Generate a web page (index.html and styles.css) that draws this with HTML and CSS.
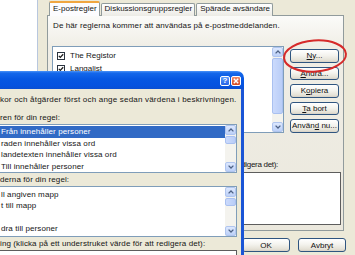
FILE: index.html
```html
<!DOCTYPE html>
<html lang="sv">
<head>
<meta charset="utf-8">
<title>Regler för meddelanden</title>
<link rel="stylesheet" href="styles.css">
</head>
<body>
<div class="desk">
  <div class="win-back">
    <div class="tabs">
      <div class="tab tab-active">E-postregler</div>
      <div class="tab">Diskussionsgruppsregler</div>
      <div class="tab">Spärade avsändare</div>
    </div>
    <div class="panel">
      <p class="intro">De här reglerna kommer att användas på e-postmeddelanden.</p>
      <div class="rules-row">
        <div class="listbox rules-list">
          <ul class="rules">
            <li><svg class="check" viewBox="0 0 8 8"><rect x="0.5" y="0.5" width="7" height="7" fill="#fff" stroke="#2b3440"/><path d="M1.8 3.9 L3.3 5.4 L6.2 2.2" fill="none" stroke="#1d1d1d" stroke-width="1.3"/></svg>The Registor</li>
            <li><svg class="check" viewBox="0 0 8 8"><rect x="0.5" y="0.5" width="7" height="7" fill="#fff" stroke="#2b3440"/><path d="M1.8 3.9 L3.3 5.4 L6.2 2.2" fill="none" stroke="#1d1d1d" stroke-width="1.3"/></svg>Langalist</li>
          </ul>
          <div class="scrollbar">
            <div class="sb-btn"><svg width="6" height="4" viewBox="0 0 6 4"><path d="M0.6 3.4 L3 1 L5.4 3.4" fill="none" stroke="#4d6185" stroke-width="1.3"/></svg></div>
            <div class="sb-track"><div class="sb-thumb sb-thumb-tall"></div></div>
            <div class="sb-btn"><svg width="6" height="4" viewBox="0 0 6 4"><path d="M0.6 0.6 L3 3 L5.4 0.6" fill="none" stroke="#4d6185" stroke-width="1.3"/></svg></div>
          </div>
        </div>
        <div class="btn-col">
          <button class="btn"><span><u>N</u>y...</span></button>
          <button class="btn"><span><u>Ä</u>ndra...</span></button>
          <button class="btn"><span>K<u>o</u>piera</span></button>
          <button class="btn"><span><u>T</u>a bort</span></button>
          <button class="btn"><span>Använ<u>d</u> nu...</span></button>
        </div>
      </div>
      <p class="desc-label">Regelbeskrivning (klicka på ett understruket värde för att redigera det):</p>
      <div class="desc-box"></div>
    </div>
    <div class="footer">
      <button class="btn btn-foot">OK</button>
      <button class="btn btn-foot">Avbryt</button>
    </div>
  </div>

  <svg class="ring" width="68" height="38" viewBox="0 0 68 38"><ellipse cx="33" cy="18" rx="31" ry="15.5" transform="rotate(-4 33 18)" fill="none" stroke="#d62a2a" stroke-width="2"/></svg>

  <div class="win-front">
    <div class="titlebar">
      <span class="tb-btn tb-help">?</span>
      <span class="tb-btn tb-close"><svg width="6" height="6" viewBox="0 0 6 6"><path d="M0.8 0.8 L5.2 5.2 M5.2 0.8 L0.8 5.2" stroke="#fff" stroke-width="1.4"/></svg></span>
    </div>
    <div class="fbody">
      <p class="line line-lead">kor och åtgärder först och ange sedan värdena i beskrivningen.</p>
      <p class="line lab1">ren för din regel:</p>
      <div class="listbox flist cond">
        <ul class="items">
          <li class="sel">Från innehåller personer</li>
          <li>raden innehåller vissa ord</li>
          <li>landetexten innehåller vissa ord</li>
          <li>Till innehåller personer</li>
        </ul>
        <div class="scrollbar">
          <div class="sb-btn"><svg width="6" height="4" viewBox="0 0 6 4"><path d="M0.6 3.4 L3 1 L5.4 3.4" fill="none" stroke="#4d6185" stroke-width="1.3"/></svg></div>
          <div class="sb-track"><div class="sb-thumb"></div></div>
          <div class="sb-btn"><svg width="6" height="4" viewBox="0 0 6 4"><path d="M0.6 0.6 L3 3 L5.4 0.6" fill="none" stroke="#4d6185" stroke-width="1.3"/></svg></div>
        </div>
      </div>
      <p class="line lab2">derna för din regel:</p>
      <div class="listbox flist acts">
        <ul class="items">
          <li>ll angiven mapp</li>
          <li>t till mapp</li>
          <li></li>
          <li>dra till personer</li>
        </ul>
        <div class="scrollbar">
          <div class="sb-btn"><svg width="6" height="4" viewBox="0 0 6 4"><path d="M0.6 3.4 L3 1 L5.4 3.4" fill="none" stroke="#4d6185" stroke-width="1.3"/></svg></div>
          <div class="sb-track"><div class="sb-thumb"></div></div>
          <div class="sb-btn"><svg width="6" height="4" viewBox="0 0 6 4"><path d="M0.6 0.6 L3 3 L5.4 0.6" fill="none" stroke="#4d6185" stroke-width="1.3"/></svg></div>
        </div>
      </div>
      <p class="line lab3">ing (klicka på ett understruket värde för att redigera det):</p>
      <div class="fdesc"></div>
    </div>
  </div>
</div>
</body>
</html>
```

FILE: styles.css
```css
* { box-sizing: border-box; }
html, body { margin: 0; padding: 0; }
body {
  width: 355px;
  height: 255px;
  overflow: hidden;
  background: #fff;
  font-family: "Liberation Sans", Arial, sans-serif;
  font-size: 8px;
  letter-spacing: 0;
  color: #151515;
}
p { margin: 0; }
.desk { position: relative; width: 355px; height: 255px; overflow: hidden; }

/* background dialog */
.win-back {
  position: absolute;
  left: 37px;
  top: 0;
  width: 318px;
  height: 255px;
  background: #ece9d8;
  border-left: 1px solid #b8c7de;
}
.tabs {
  display: flex;
  align-items: flex-end;
  height: 16px;
  padding-left: 11px;
}
.tab {
  height: 13px;
  line-height: 10px;
  padding: 0 2px 0 3px;
  border: 1px solid #919b9c;
  border-bottom: none;
  border-radius: 2px 2px 0 0;
  background: linear-gradient(#ffffff, #ecebe5);
  white-space: nowrap;
}
.tab + .tab { margin-left: 1px; }
.tab-active {
  position: relative;
  z-index: 1;
  height: 15px;
  line-height: 12px;
  background: #fcfcfe;
  border-top: 2px solid #f0a640;
}
.panel {
  margin: -1px 0 0 9px;
  width: 297px;
  height: 216px;
  border: 1px solid #919b9c;
  background: linear-gradient(#fbfbf9, #f0eee6 30px, #ebe8dd);
  padding: 4px 4px 0;
}
.intro { line-height: 12px; padding-left: 1px; letter-spacing: 0.1px; white-space: nowrap; }
.rules-row { display: flex; gap: 6px; margin-top: 14px; }

.listbox {
  display: flex;
  background: #fff;
  border: 1px solid #7f9db9;
}
.rules-list { width: 233px; height: 87px; }
.rules { flex: 1; list-style: none; margin: 0; padding: 2px 0 0 4px; }
.rules li { display: flex; align-items: center; gap: 5px; height: 13px; }
.check { width: 8px; height: 8px; flex: none; }

.scrollbar {
  width: 11px;
  display: flex;
  flex-direction: column;
  background: #f4f3ee;
}
.sb-btn {
  height: 10px;
  flex: none;
  display: flex;
  align-items: center;
  justify-content: center;
  background: linear-gradient(#dde8fe, #bcd0f8);
  border: 1px solid #b0c5ef;
  border-radius: 2px;
}
.sb-track { flex: 1; padding: 1px 0; }
.sb-thumb {
  height: 8px;
  background: linear-gradient(90deg, #cbdafc, #b9cdf7);
  border: 1px solid #a9c0f0;
  border-radius: 2px;
}
.sb-thumb-tall { height: 56px; }

.btn-col { display: flex; flex-direction: column; gap: 4px; margin-top: 3px; }
.btn {
  font: inherit;
  letter-spacing: inherit;
  color: #111;
  width: 49px;
  height: 13.5px;
  padding: 0;
  border: 1px solid #2f5580;
  border-radius: 3px;
  background: linear-gradient(#ffffff, #f4f3ee 45%, #e4e1d6 85%, #d6d0c5);
  display: flex;
  align-items: center;
  justify-content: center;
}
.desc-label {
  margin: 26px 0 0 -2px;
  line-height: 12px;
  letter-spacing: -0.3px;
  white-space: nowrap;
}
.desc-box {
  margin-top: 1px;
  width: 289px;
  height: 53px;
  background: #fff;
  border: 1px solid #5d5d5d;
}
.footer { display: flex; gap: 8px; padding: 7px 0 0 204px; }
.btn-foot { width: 48px; height: 14px; }

.ring { position: absolute; left: 282px; top: 38px; }

/* front dialog */
.win-front {
  position: absolute;
  left: 0;
  top: 71px;
  width: 244px;
  height: 190px;
  display: flex;
  flex-direction: column;
  letter-spacing: 0.1px;
}
.titlebar {
  height: 18px;
  flex: none;
  border-radius: 0 7px 0 0;
  background: linear-gradient(#4a93f8 0%, #1467ea 12%, #0657e2 45%, #0553e0 80%, #0a4fd2 100%);
  display: flex;
  justify-content: flex-end;
  align-items: center;
  gap: 1px;
  padding: 1px 3px 0 0;
}
.tb-btn {
  width: 10px;
  height: 10px;
  border: 1px solid #fff;
  border-radius: 2px;
  display: flex;
  align-items: center;
  justify-content: center;
  color: #fff;
  font-weight: bold;
  font-size: 8px;
  line-height: 1;
}
.tb-help { background: linear-gradient(#5b9bfb, #2563e6); }
.tb-close { background: linear-gradient(#ec8a6a, #d54a23); }

.fbody {
  flex: 1;
  background: #ece9d8;
  border-right: 3px solid #1a55d6;
  padding-top: 5px;
}
.line { height: 12px; line-height: 12px; white-space: nowrap; }
.line-lead { letter-spacing: 0.2px; }
.lab1 { margin-top: 6px; }
.lab2, .lab3 { margin-top: 1px; }
.flist { width: 237px; border-left: none; }
.cond { height: 49px; }
.acts { height: 51px; }
.items { flex: 1; list-style: none; margin: 0; padding: 1px 0 0; }
.acts .items { padding-top: 1.5px; }
.items li { height: 11.5px; line-height: 11.5px; padding-left: 1px; white-space: nowrap; }
.items li.sel { background: #316ac5; color: #fff; }
.fdesc {
  width: 237px;
  height: 20px;
  background: #fff;
  border: 1px solid #5d5d5d;
  border-left: none;
}
```
